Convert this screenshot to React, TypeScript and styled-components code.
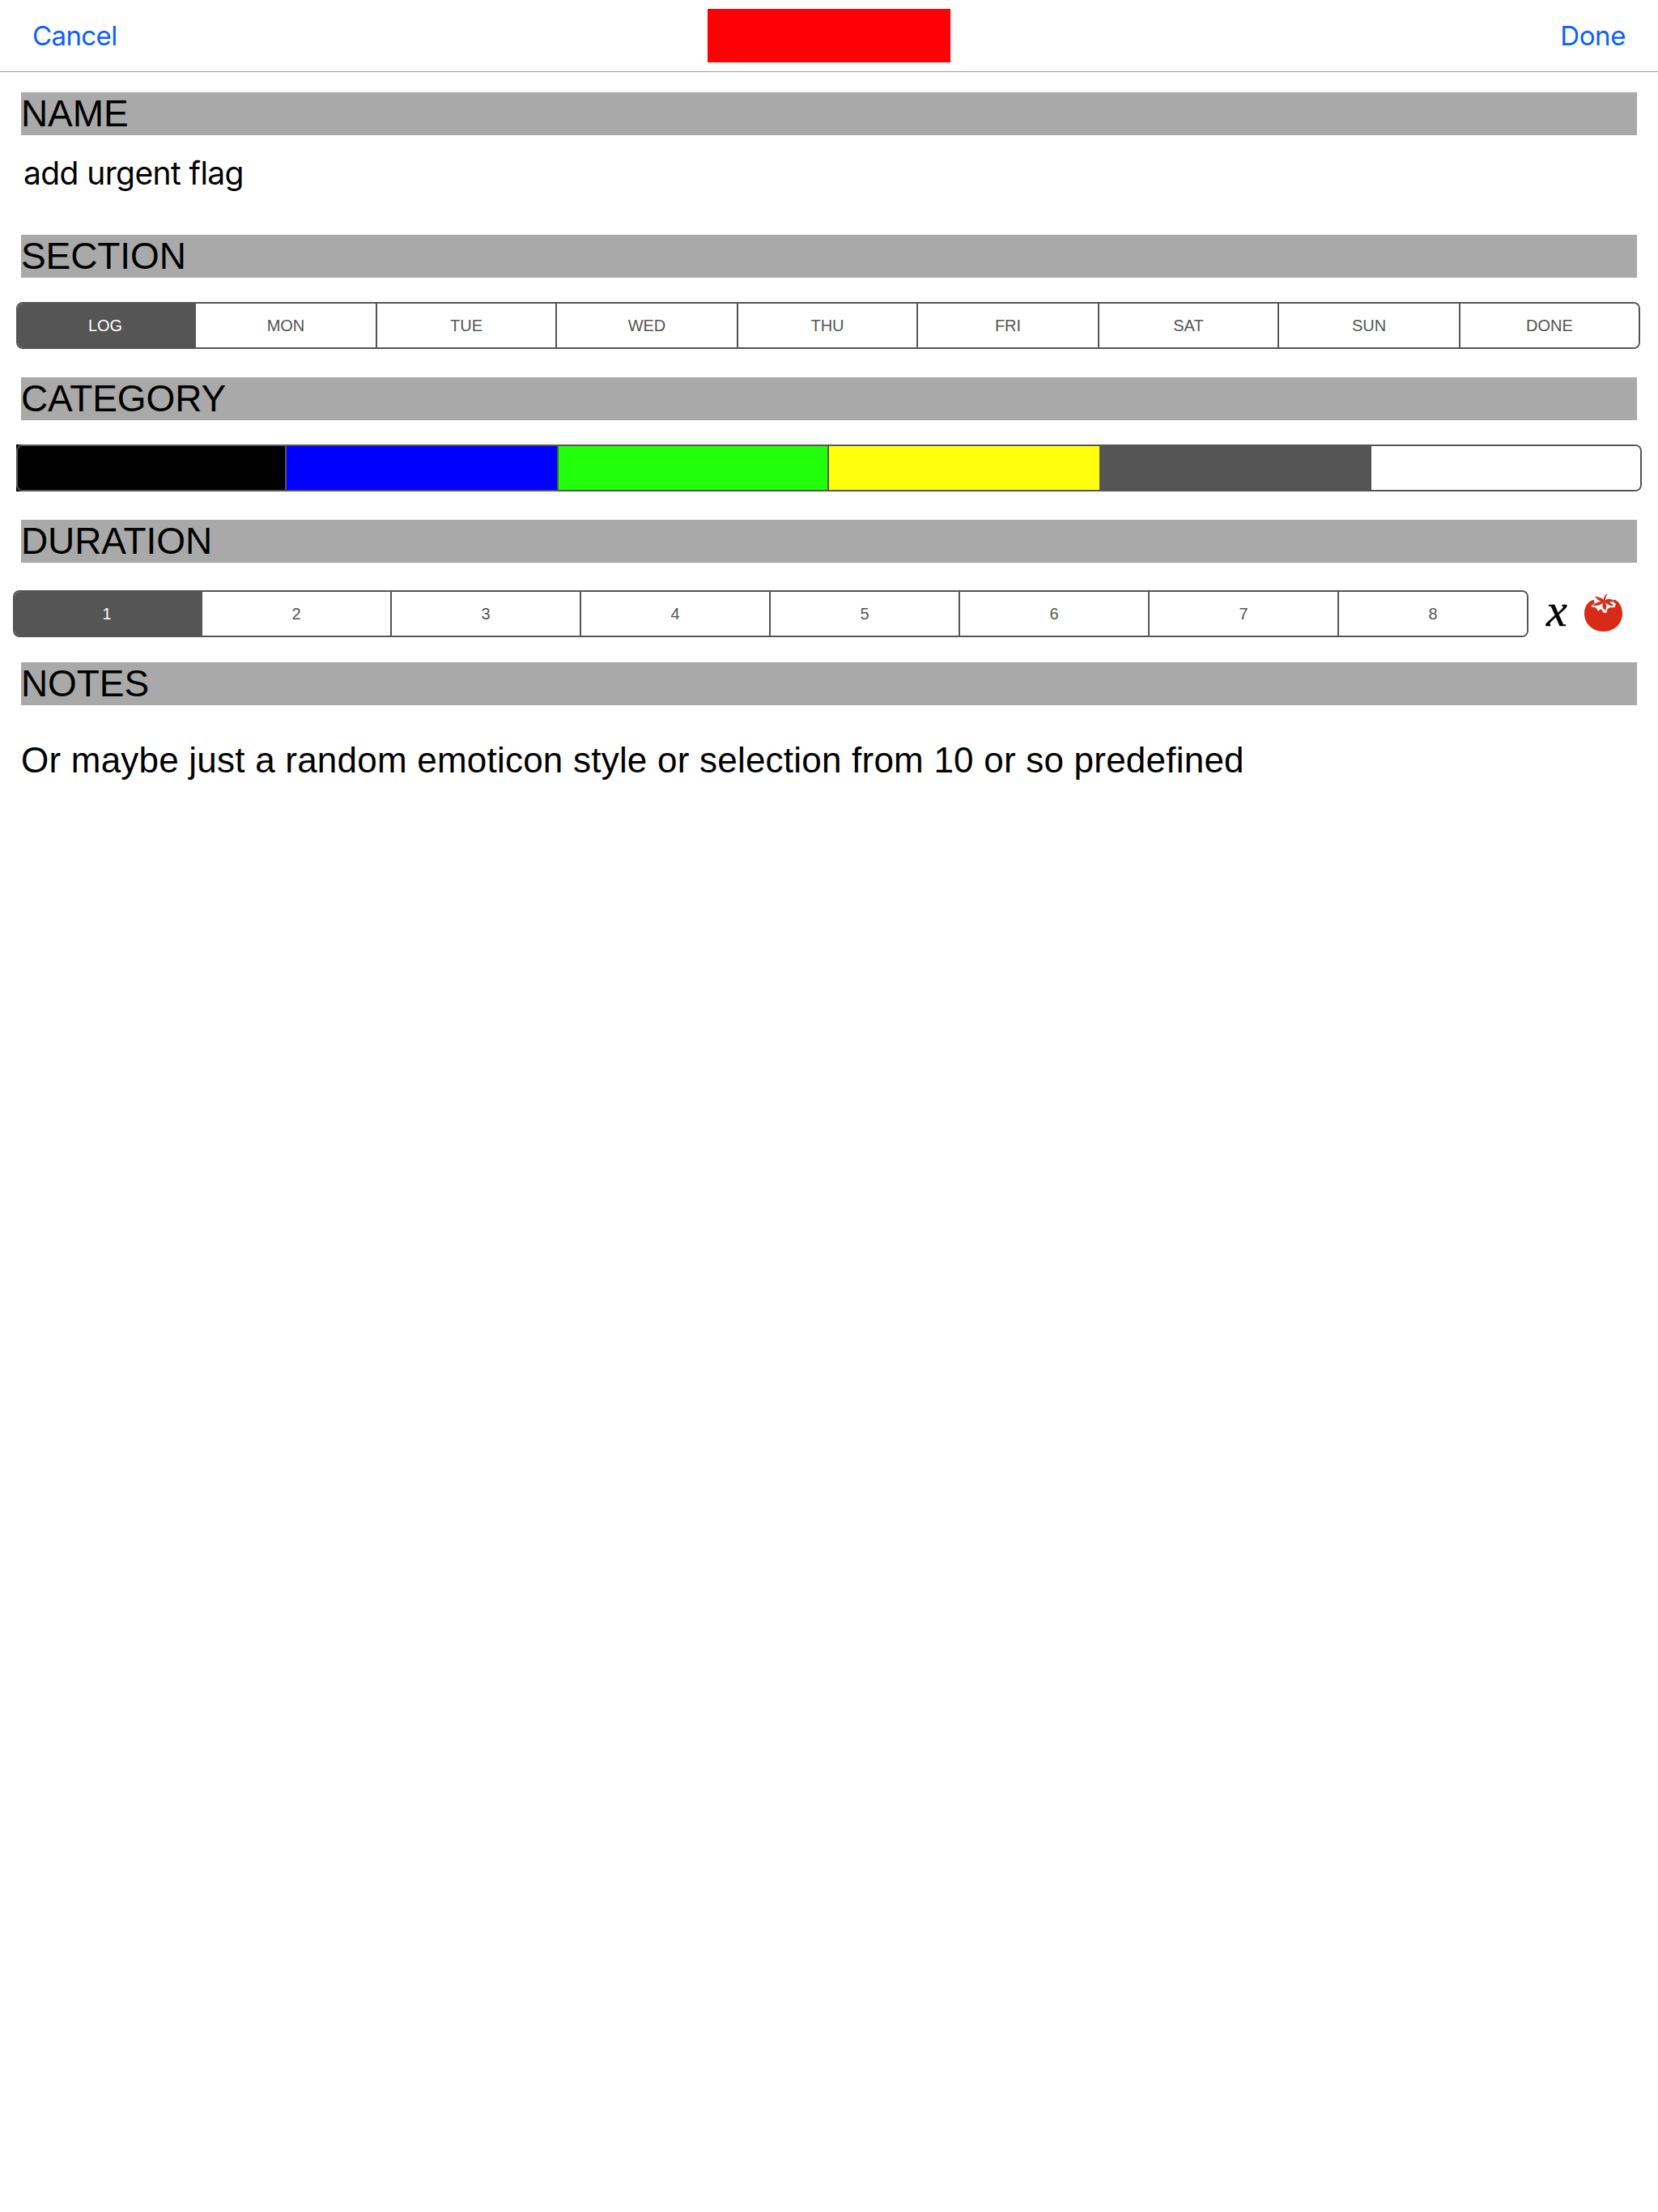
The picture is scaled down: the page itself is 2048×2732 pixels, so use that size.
import React, { useState } from "react";
import styled, { createGlobalStyle } from "styled-components";

const INK = "#555555";

const GlobalStyle = createGlobalStyle`
  body {
    margin: 0;
    background: #fff;
    color: #000;
    font-family: "Liberation Sans", Arial, sans-serif;
  }
`;

const Screen = styled.div`
  width: 2048px;
  min-height: 2732px;
  background: #fff;
`;

const NavBar = styled.header`
  box-sizing: border-box;
  height: 89px;
  padding: 0 40px;
  display: grid;
  grid-template-columns: 1fr 300px 1fr;
  align-items: center;
  border-bottom: 1px solid #a2a2a2;
`;

const NavButton = styled.button<{ $end?: boolean }>`
  justify-self: ${(p) => (p.$end ? "end" : "start")};
  padding: 0;
  border: 0;
  background: none;
  color: #0a60ff;
  font: 400 33px/40px Inter, sans-serif;
  letter-spacing: ${(p) => (p.$end ? "-0.4px" : "-0.6px")};
`;

const TitleBlock = styled.div`
  height: 66px;
  background: #ff0006;
`;

const Form = styled.main`
  padding-top: 25px;
`;

const Group = styled.section`
  height: 176px;
`;

const Heading = styled.h2`
  margin: 0 26px;
  height: 53px;
  font-size: 46px;
  font-weight: 400;
  line-height: 53px;
  letter-spacing: -0.1px;
  background: #a9a9a9;
`;

const NameValue = styled.div`
  padding: 23px 29px 0;
  font: 400 39px/48px Inter, sans-serif;
  letter-spacing: -0.6px;
`;

const NotesValue = styled.p`
  margin: 0;
  padding: 41px 26px 0;
  font-size: 44px;
  line-height: 53px;
  letter-spacing: 0.22px;
`;

const SegmentRow = styled.div<{ $top: number; $left: number }>`
  display: flex;
  align-items: center;
  padding: ${(p) => p.$top}px 0 0 ${(p) => p.$left}px;
`;

const Segments = styled.div<{ $columns: string }>`
  box-sizing: border-box;
  height: 58px;
  display: grid;
  grid-template-columns: ${(p) => p.$columns};
  border: 2px solid ${INK};
  border-radius: 8px;
  overflow: hidden;
`;

const Segment = styled.button<{ $selected?: boolean; $fill?: string }>`
  padding: 0;
  border: 0;
  border-right: 2px solid ${INK};
  background: ${(p) => (p.$selected ? INK : p.$fill ?? "#fff")};
  color: ${(p) => (p.$selected ? "#fff" : INK)};
  font: 400 20px/24px "Liberation Sans", Arial, sans-serif;
  &:first-child {
    padding-right: 2px;
  }
  &:last-child {
    border-right: 0;
  }
`;

const SwatchBacking = styled.div`
  background: linear-gradient(to right, #000 20px, transparent 20px);
`;

const Times = styled.span`
  width: 30px;
  margin: 0 0 8px 22px;
  font: italic 400 58px/50px "Liberation Serif", "Times New Roman", serif;
  -webkit-text-stroke: 0.5px #000;
`;

const TomatoIcon = styled.svg`
  width: 50px;
  height: 50px;
  margin: 0 0 3px 16px;
`;

const DAYS = ["LOG", "MON", "TUE", "WED", "THU", "FRI", "SAT", "SUN", "DONE"];
const COLOURS = ["#000000", "#0000ff", "#22ff0a", "#ffff0d", INK, "#ffffff"];
const COUNTS = ["1", "2", "3", "4", "5", "6", "7", "8"];

function Tomato() {
  return (
    <TomatoIcon viewBox="288 96 150 150" aria-label="tomato">
      <path
        fill="#d92a17"
        d="M326 122C305 126 291 147 291 173C291 213 323 240 362 240C401 240 432 212 432 174C432 147 418 126 400 121Z"
      />
      <path fill="#fff" d="M326 119L402 119L397 130L408 137L403 151L386 151L377 156L373 171L362 170L353 156L342 164L335 152L315 147L329 134Z" />
      <g fill="#d92a17">
        <path d="M363 128C350 132 339 121 330 110C344 111 358 116 364 124Z" />
        <path d="M364 126C353 129 338 129 322 143C340 147 355 140 364 129Z" />
        <path d="M362 128C356 139 357 153 369 163C374 150 373 137 367 127Z" />
        <path d="M366 127C372 138 383 145 398 146C398 138 384 131 370 126Z" />
        <path d="M366 127C373 117 388 116 401 126C388 133 376 133 366 130Z" />
        <path d="M361 126C362 115 367 106 373 101L376 103C371 110 369 117 368 127Z" />
      </g>
    </TomatoIcon>
  );
}

export default function App() {
  const [day, setDay] = useState(0);
  const [count, setCount] = useState(0);

  return (
    <Screen>
      <GlobalStyle />
      <NavBar>
        <NavButton>Cancel</NavButton>
        <TitleBlock />
        <NavButton $end>Done</NavButton>
      </NavBar>
      <Form>
        <Group>
          <Heading>NAME</Heading>
          <NameValue>add urgent flag</NameValue>
        </Group>
        <Group>
          <Heading>SECTION</Heading>
          <SegmentRow $top={30} $left={20}>
            <Segments $columns="220px 224px 222px 224px 222px 224px 222px 224px 220px">
              {DAYS.map((label, i) => (
                <Segment key={label} $selected={i === day} onClick={() => setDay(i)}>
                  {label}
                </Segment>
              ))}
            </Segments>
          </SegmentRow>
        </Group>
        <Group>
          <Heading>CATEGORY</Heading>
          <SegmentRow $top={30} $left={20}>
            <SwatchBacking>
              <Segments $columns="332px 336px 334px 336px 334px 332px">
                {COLOURS.map((fill) => (
                  <Segment key={fill} $fill={fill} />
                ))}
              </Segments>
            </SwatchBacking>
          </SegmentRow>
        </Group>
        <Group>
          <Heading>DURATION</Heading>
          <SegmentRow $top={34} $left={16}>
            <Segments $columns="232px repeat(6, 234px) 232px">
              {COUNTS.map((label, i) => (
                <Segment key={label} $selected={i === count} onClick={() => setCount(i)}>
                  {label}
                </Segment>
              ))}
            </Segments>
            <Times>x</Times>
            <Tomato />
          </SegmentRow>
        </Group>
        <Group>
          <Heading>NOTES</Heading>
          <NotesValue>
            Or maybe just a random emoticon style or selection from 10 or so predefined
          </NotesValue>
        </Group>
      </Form>
    </Screen>
  );
}
